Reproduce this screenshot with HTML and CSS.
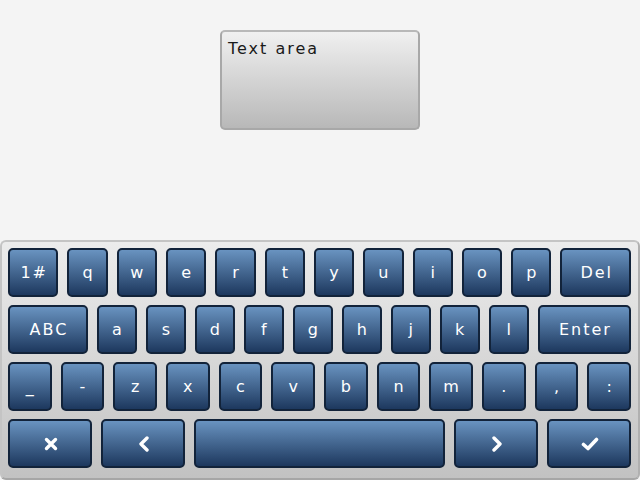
FILE: index.html
```
<!DOCTYPE html>
<html>
<head>
<meta charset="utf-8">
<link rel="stylesheet" href="styles.css">
</head>
<body>
<div class="screen">
  <div class="ta-wrap">
    <div class="textarea">Text area</div>
  </div>
  <div class="keyboard">
    <div class="row r1">
      <div class="key">1#</div>
      <div class="key">q</div><div class="key">w</div><div class="key">e</div><div class="key">r</div><div class="key">t</div>
      <div class="key">y</div><div class="key">u</div><div class="key">i</div><div class="key">o</div><div class="key">p</div>
      <div class="key">Del</div>
    </div>
    <div class="row r2">
      <div class="key">ABC</div>
      <div class="key">a</div><div class="key">s</div><div class="key">d</div><div class="key">f</div><div class="key">g</div>
      <div class="key">h</div><div class="key">j</div><div class="key">k</div><div class="key">l</div>
      <div class="key">Enter</div>
    </div>
    <div class="row r3">
      <div class="key">_</div><div class="key">-</div><div class="key">z</div><div class="key">x</div>
      <div class="key">c</div><div class="key">v</div><div class="key">b</div><div class="key">n</div>
      <div class="key">m</div><div class="key">.</div><div class="key">,</div><div class="key">:</div>
    </div>
    <div class="row r4">
      <div class="key"><svg class="ico" width="14" height="14" viewBox="0 0 14 14"><path d="M2.5 2.5 L11.5 11.5 M11.5 2.5 L2.5 11.5" stroke="#fff" stroke-width="3.4" stroke-linecap="round"/></svg></div>
      <div class="key"><svg class="ico" width="12" height="16" viewBox="0 0 12 16"><path d="M9 2 L3 8 L9 14" fill="none" stroke="#fff" stroke-width="3.4" stroke-linecap="round" stroke-linejoin="round"/></svg></div>
      <div class="key"></div>
      <div class="key"><svg class="ico" width="12" height="16" viewBox="0 0 12 16"><path d="M3 2 L9 8 L3 14" fill="none" stroke="#fff" stroke-width="3.4" stroke-linecap="round" stroke-linejoin="round"/></svg></div>
      <div class="key"><svg class="ico" width="18" height="14" viewBox="0 0 18 14"><path d="M2.5 7.5 L7 11.5 L15.5 2.5" fill="none" stroke="#fff" stroke-width="3.6" stroke-linecap="round" stroke-linejoin="round"/></svg></div>
    </div>
  </div>
</div>
</body>
</html>
```

FILE: styles.css
```
* { box-sizing: border-box; }
html, body {
  margin: 0;
  padding: 0;
  background: #f4f4f4;
}
.screen {
  width: 640px;
  height: 480px;
  display: flex;
  flex-direction: column;
  font-family: "DejaVu Sans", sans-serif;
}
.ta-wrap {
  height: 240px;
  display: flex;
  justify-content: center;
  padding-top: 30px;
}
.textarea {
  width: 200px;
  height: 100px;
  border: 2px solid #a8a8a8;
  border-top-color: #b8b8b8;
  border-radius: 5px;
  background: linear-gradient(to bottom, #f0f0f0, #b8b8b8);
  color: #1a1a1a;
  font-size: 16px;
  letter-spacing: 2px;
  line-height: 19px;
  padding: 7px 6px;
}
.keyboard {
  height: 240px;
  border: 2px solid #c4c4c4;
  border-bottom-color: #a6a6a6;
  border-right-color: #b0b0b0;
  border-radius: 6px;
  background: linear-gradient(to bottom, #ececec, #c2c2c2);
  padding: 6px 7px 0 6px;
  display: flex;
  flex-direction: column;
  gap: 8px;
}
.row {
  height: 49px;
  display: grid;
  column-gap: 9px;
}
.r1 { grid-template-columns: minmax(0, 5fr) repeat(10, minmax(0, 4fr)) minmax(0, 7fr); }
.r2 { grid-template-columns: minmax(0, 6fr) repeat(9, minmax(0, 3fr)) minmax(0, 7fr); }
.r3 { grid-template-columns: repeat(12, minmax(0, 1fr)); }
.r4 { grid-template-columns: minmax(0, 2fr) minmax(0, 2fr) minmax(0, 6fr) minmax(0, 2fr) minmax(0, 2fr); }
.key {
  border: 2px solid #12233a;
  border-radius: 5px;
  background: linear-gradient(to bottom, #6993c0, #1d385e);
  color: #ffffff;
  font-size: 16px;
  letter-spacing: 2px;
  display: flex;
  align-items: center;
  justify-content: center;
  padding-left: 2px;
}
.ico { display: block; }
```
